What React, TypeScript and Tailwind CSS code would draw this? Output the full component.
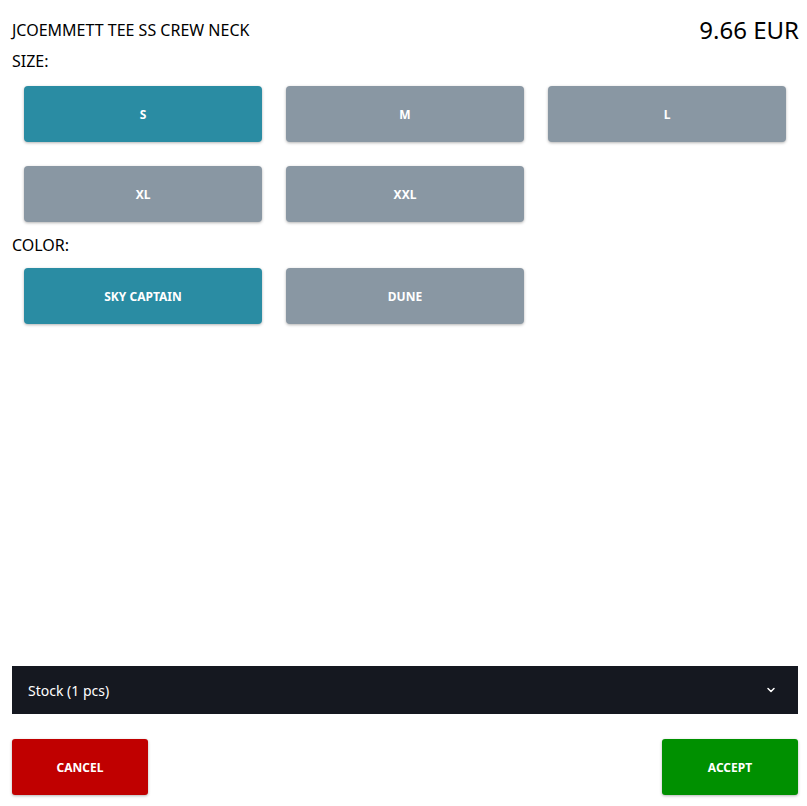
import React from "react";

const font = { fontFamily: '"Noto Sans", "Open Sans", sans-serif' };

function OptBtn({ label, active }: { label: string; active?: boolean }) {
  return (
    <button
      className={
        (active ? "bg-[#2a8ca3]" : "bg-[#8997a3]") +
        " h-14 pt-[2px] rounded-[4px] text-white text-[12px] font-bold shadow-[0_1px_3px_rgba(0,0,0,0.3)]"
      }
    >
      {label}
    </button>
  );
}

export default function App() {
  return (
    <div style={font} className="h-[806px] w-full bg-white flex flex-col pl-3 pr-[9px] text-black">
      <div className="flex items-start justify-between pt-[18px]">
        <div className="text-[16px] leading-[24px]">JCOEMMETT TEE SS CREW NECK</div>
        <div className="text-[24px] leading-[24px] -mr-[1px]">9.66 EUR</div>
      </div>
      <div className="text-[16px] leading-[24px] mt-[7px]">SIZE:</div>
      <div className="grid grid-cols-3 gap-6 px-3 mt-[13px]">
        <OptBtn label="S" active />
        <OptBtn label="M" />
        <OptBtn label="L" />
        <OptBtn label="XL" />
        <OptBtn label="XXL" />
      </div>
      <div className="text-[16px] leading-[24px] mt-[11px]">COLOR:</div>
      <div className="grid grid-cols-3 gap-6 px-3 mt-[11px]">
        <OptBtn label="SKY CAPTAIN" active />
        <OptBtn label="DUNE" />
      </div>
      <div className="mt-auto h-12 bg-[#151820] flex items-center justify-between pl-4 pr-[21px] text-white">
        <span className="text-[14px]">Stock (1 pcs)</span>
        <svg width="12" height="12" viewBox="0 0 24 24" fill="none" stroke="currentColor" strokeWidth="3" strokeLinecap="round" strokeLinejoin="round">
          <path d="M6 9l6 6 6-6" />
        </svg>
      </div>
      <div className="flex justify-between mt-[25px] mb-[11px]">
        <button className="w-[136px] h-14 pt-[2px] rounded-[3px] bg-[#c00000] text-white text-[12px] font-bold shadow-[0_1px_3px_rgba(0,0,0,0.3)]">CANCEL</button>
        <button className="w-[136px] h-14 pt-[2px] rounded-[3px] bg-[#009000] text-white text-[12px] font-bold shadow-[0_1px_3px_rgba(0,0,0,0.3)]">ACCEPT</button>
      </div>
    </div>
  );
}
